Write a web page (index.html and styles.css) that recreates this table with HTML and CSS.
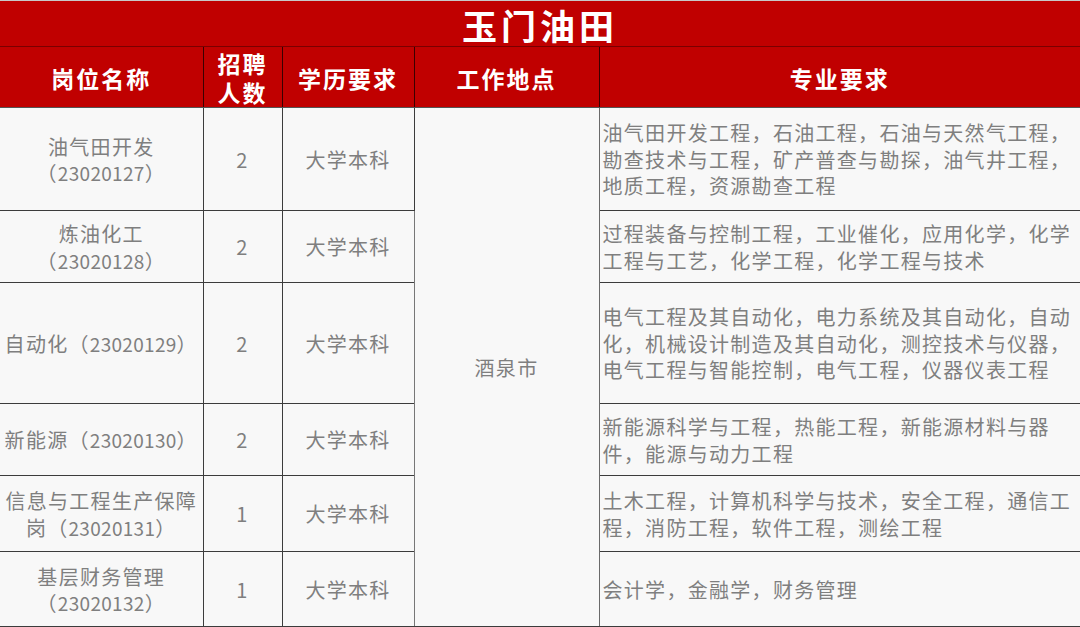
FILE: index.html
```html
<!DOCTYPE html>
<html lang="zh">
<head>
<meta charset="utf-8">
<title>玉门油田</title>
<link rel="stylesheet" href="styles.css">
</head>
<body>
<table class="jobs">
  <colgroup>
    <col class="c-name">
    <col class="c-count">
    <col class="c-edu">
    <col class="c-place">
    <col class="c-major">
  </colgroup>
  <thead>
    <tr class="title-row"><th colspan="5" class="title">玉门油田</th></tr>
    <tr class="head-row">
      <th>岗位名称</th>
      <th class="narrow">招聘人数</th>
      <th>学历要求</th>
      <th>工作地点</th>
      <th>专业要求</th>
    </tr>
  </thead>
  <tbody>
    <tr class="r1">
      <td class="name">油气田开发（<span class="id">23020127</span>）</td>
      <td class="num">2</td>
      <td>大学本科</td>
      <td rowspan="6" class="place">酒泉市</td>
      <td class="major">油气田开发工程，石油工程，石油与天然气工程，勘查技术与工程，矿产普查与勘探，油气井工程，地质工程，资源勘查工程</td>
    </tr>
    <tr class="r2">
      <td class="name">炼油化工（<span class="id">23020128</span>）</td>
      <td class="num">2</td>
      <td>大学本科</td>
      <td class="major">过程装备与控制工程，工业催化，应用化学，化学工程与工艺，化学工程，化学工程与技术</td>
    </tr>
    <tr class="r3">
      <td class="name">自动化（<span class="id">23020129</span>）</td>
      <td class="num">2</td>
      <td>大学本科</td>
      <td class="major">电气工程及其自动化，电力系统及其自动化，自动化，机械设计制造及其自动化，测控技术与仪器，电气工程与智能控制，电气工程，仪器仪表工程</td>
    </tr>
    <tr class="r4">
      <td class="name">新能源（<span class="id">23020130</span>）</td>
      <td class="num">2</td>
      <td>大学本科</td>
      <td class="major">新能源科学与工程，热能工程，新能源材料与器件，能源与动力工程</td>
    </tr>
    <tr class="r5">
      <td class="name">信息与工程生产保障岗（<span class="id">23020131</span>）</td>
      <td class="num">1</td>
      <td>大学本科</td>
      <td class="major">土木工程，计算机科学与技术，安全工程，通信工程，消防工程，软件工程，测绘工程</td>
    </tr>
    <tr class="r6">
      <td class="name">基层财务管理（<span class="id">23020132</span>）</td>
      <td class="num">1</td>
      <td>大学本科</td>
      <td class="major">会计学，金融学，财务管理</td>
    </tr>
  </tbody>
</table>
</body>
</html>
```
FILE: styles.css
```css
html, body {
  margin: 0;
  padding: 0;
  background: #ffffff;
}

.jobs {
  width: 1080px;
  border-collapse: collapse;
  table-layout: fixed;
  font-family: "Noto Sans CJK SC", "Noto Sans", sans-serif;
}

.c-name { width: 203px; }
.c-count { width: 79px; }
.c-edu { width: 132px; }
.c-place { width: 185px; }
.c-major { width: 481px; }

.jobs th {
  background: #c00000;
  color: #ffffff;
  font-weight: 700;
  font-size: 23px;
  letter-spacing: 2px;
  line-height: 29px;
  padding: 0;
  text-align: center;
  border: 1px solid #3a0000;
}

.jobs th.narrow {
  padding: 2px 10px 0;
}

.title-row { height: 46px; }
.jobs th.title {
  font-size: 35px;
  letter-spacing: 4px;
  line-height: 40px;
  font-weight: 700;
  padding-top: 3px;
  border-top: 1px solid #c8c8c8;
  border-left: none;
  border-right: none;
  border-bottom: 1px solid #7a0000;
}

.head-row { height: 60px; }
.head-row th:first-child { border-left: none; }
.head-row th:last-child { border-right: none; }
.head-row th { border-bottom: 1px solid #555555; padding-top: 2px; }

.jobs td {
  background: #f8f8f8;
  color: #7f7f7f;
  font-size: 20px;
  letter-spacing: 1.3px;
  line-height: 26.5px;
  padding: 2px 3px 0;
  text-align: center;
  vertical-align: middle;
  border: 1px solid #3c3c3c;
}

.jobs td .id {
  font-size: 19px;
  letter-spacing: 0.3px;
}

.jobs td.name { border-left: none; }
.jobs td.major {
  text-align: left;
  padding: 2px 0 0 3px;
  border-right: 1px solid #7a7a7a;
}
.jobs td.place {
  border-left-color: #777777;
  border-right-color: #6a6a6a;
}

.r1 { height: 103px; }
.r2 { height: 72px; }
.r3 { height: 121px; }
.r4 { height: 72px; }
.r5 { height: 76px; }
.r6 { height: 75px; }
```
